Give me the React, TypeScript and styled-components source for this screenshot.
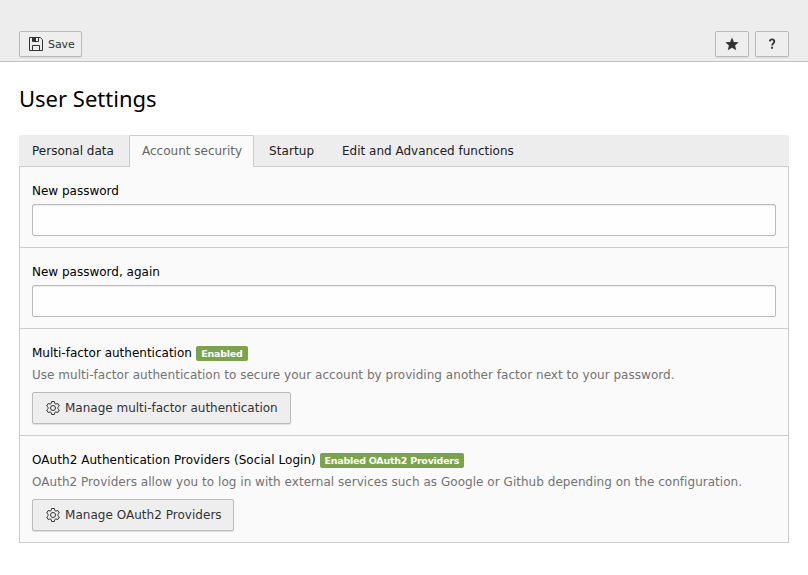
import React from "react";
import styled, { createGlobalStyle } from "styled-components";

const GlobalStyle = createGlobalStyle`
  * { box-sizing: border-box; }
  body {
    margin: 0;
    background: #fff;
    color: #000;
    font: 12px/18px Verdana, "DejaVu Sans", sans-serif;
  }
  button, input { font: inherit; }
`;

const DocHeader = styled.header`
  height: 62px;
  padding: 31px 19px 0;
  display: flex;
  gap: 6px;
  align-items: flex-start;
  background: #ededed;
  border-bottom: 1px solid #c3c3c3;
`;

const Spacer = styled.div`
  flex: 1;
`;

const Text = styled.span<{ $track?: number }>`
  letter-spacing: ${(p) => p.$track ?? 0}px;
  white-space: nowrap;
`;

const Button = styled.button<{ $w: number; $large?: boolean }>`
  width: ${(p) => p.$w}px;
  height: ${(p) => (p.$large ? 32 : 26)}px;
  padding: 0 ${(p) => (p.$large ? 12 : 8)}px;
  display: flex;
  align-items: center;
  gap: 4px;
  color: #333;
  background: #eee;
  border: 1px solid #bbb;
  border-radius: 2px;
  box-shadow: 0 1px 1px rgba(0, 0, 0, 0.1);
  font-size: ${(p) => (p.$large ? 12 : 11)}px;
  svg { flex: none; display: block; }
`;

const SaveButton = styled(Button)`
  ${Text} { padding-top: 1px; }
`;

const IconButton = styled(Button)`
  justify-content: center;
`;

const Main = styled.main`
  padding: 22px 19px 0;
`;

const Title = styled.h1`
  margin: 0 0 22px;
  font: 400 22px/29px "Noto Sans", sans-serif;
`;

const Tabs = styled.nav`
  display: flex;
  height: 31px;
  background: #ededed;
  border-radius: 2px 2px 0 0;
`;

const Tab = styled.a<{ $w: number; $active?: boolean; $indent?: number }>`
  width: ${(p) => p.$w}px;
  height: ${(p) => (p.$active ? 32 : 31)}px;
  padding-left: ${(p) => p.$indent ?? 13}px;
  padding-top: ${(p) => (p.$active ? 6 : 7)}px;
  z-index: 1;
  color: ${(p) => (p.$active ? "#666" : "#212121")};
  background: ${(p) => (p.$active ? "#fafafa" : "transparent")};
  border: ${(p) => (p.$active ? "1px solid #ccc" : "0")};
  border-bottom: 0;
  border-radius: 2px 2px 0 0;
`;

const Panel = styled.div`
  background: #fafafa;
  border: 1px solid #ccc;
`;

const Section = styled.section<{ $h: number }>`
  height: ${(p) => p.$h}px;
  padding: 15px 12px 0;
  & + & { border-top: 1px solid #ccc; }
`;

const Label = styled.label`
  display: flex;
  height: 18px;
  gap: 4px;
`;

const Field = styled.input`
  display: block;
  width: 100%;
  height: 32px;
  margin-top: 4px;
  background: #fefefe;
  border: 1px solid #bbb;
  border-radius: 2px;
  box-shadow: inset 0 1px 1px rgba(0, 0, 0, 0.075);
`;

const Badge = styled.span<{ $w: number }>`
  width: ${(p) => p.$w}px;
  height: 15px;
  margin-top: 2px;
  color: #fff;
  background: #79a548;
  border-radius: 2px;
  font: 700 9.5px/15px Verdana, "DejaVu Sans", sans-serif;
  letter-spacing: -0.25px;
  text-align: center;
  white-space: nowrap;
`;

const Help = styled.p`
  margin: 4px 0 8px;
  color: #737373;
`;

const SaveIcon = () => (
  <svg width="16" height="16" viewBox="0 0 16 16" fill="none" stroke="#333">
    <path d="M1.5 1.500h10.800l2.200 2.200v10.800h-13z" />
    <path d="M4.500 1.500v4h6v-4M4.500 14.500v-5h7v5" />
    <path d="M5 1h3v4H5z" fill="#333" stroke="none" />
  </svg>
);

const StarIcon = () => (
  <svg width="16" height="16" viewBox="0 0 16 16" fill="#333">
    <path d="M8 1.500l1.900 4.400 4.800.4-3.600 3.200 1.100 4.800L8 11.800l-4.200 2.500 1.100-4.800-3.600-3.200 4.800-.4z" />
  </svg>
);

const HelpIcon = () => (
  <svg width="16" height="16" viewBox="0 0 16 16">
    <path d="M5.800 5.400C6 3.900 6.800 3.400 8 3.400c1.400 0 2.300.8 2.300 2 0 1.800-2.100 2-2.100 4" fill="none" stroke="#333" strokeWidth="1.8" />
    <path d="M7.100 10.800H9v1.900H7.100z" fill="#333" />
  </svg>
);

const GearIcon = () => (
  <svg width="16" height="16" viewBox="0 0 16 16" fill="none" stroke="#333" strokeWidth="1">
    <path d="M6.700 1.500h2.600l.5 2 1 .6 2-.6 1.500 2.500-1.500 1.400v1.200l1.500 1.400-1.500 2.500-2-.6-1 .6-.5 2H6.700l-.5-2-1-.6-2 .6L1.700 10l1.500-1.400V7.400L1.700 6l1.500-2.500 2 .6 1-.6z" strokeLinejoin="round" />
    <circle cx="8" cy="8" r="2.500" />
  </svg>
);

export default function App() {
  return (
    <>
      <GlobalStyle />
      <DocHeader>
        <SaveButton $w={63}><SaveIcon /><Text $track={-0.1}>Save</Text></SaveButton>
        <Spacer />
        <IconButton $w={34} aria-label="Bookmark"><StarIcon /></IconButton>
        <IconButton $w={34} aria-label="Help"><HelpIcon /></IconButton>
      </DocHeader>
      <Main>
        <Title>User Settings</Title>
        <Tabs>
          <Tab $w={110}><Text>Personal data</Text></Tab>
          <Tab $w={125} $active $indent={12}><Text>Account security</Text></Tab>
          <Tab $w={75} $indent={15}><Text $track={0.1}>Startup</Text></Tab>
          <Tab $w={200}><Text>Edit and Advanced functions</Text></Tab>
        </Tabs>
        <Panel>
          <Section $h={80}>
            <Label><Text>New password</Text></Label>
            <Field type="password" />
          </Section>
          <Section $h={81}>
            <Label><Text>New password, again</Text></Label>
            <Field type="password" />
          </Section>
          <Section $h={107}>
            <Label><Text>Multi-factor authentication</Text><Badge $w={52}>Enabled</Badge></Label>
            <Help><Text $track={0.03}>Use multi-factor authentication to secure your account by providing another factor next to your password.</Text></Help>
            <Button $large $w={259}><GearIcon /><Text>Manage multi-factor authentication</Text></Button>
          </Section>
          <Section $h={107}>
            <Label><Text $track={0.055}>OAuth2 Authentication Providers (Social Login)</Text><Badge $w={144}>Enabled OAuth2 Providers</Badge></Label>
            <Help><Text $track={0.034}>OAuth2 Providers allow you to log in with external services such as Google or Github depending on the configuration.</Text></Help>
            <Button $large $w={202}><GearIcon /><Text $track={0.03}>Manage OAuth2 Providers</Text></Button>
          </Section>
        </Panel>
      </Main>
    </>
  );
}
